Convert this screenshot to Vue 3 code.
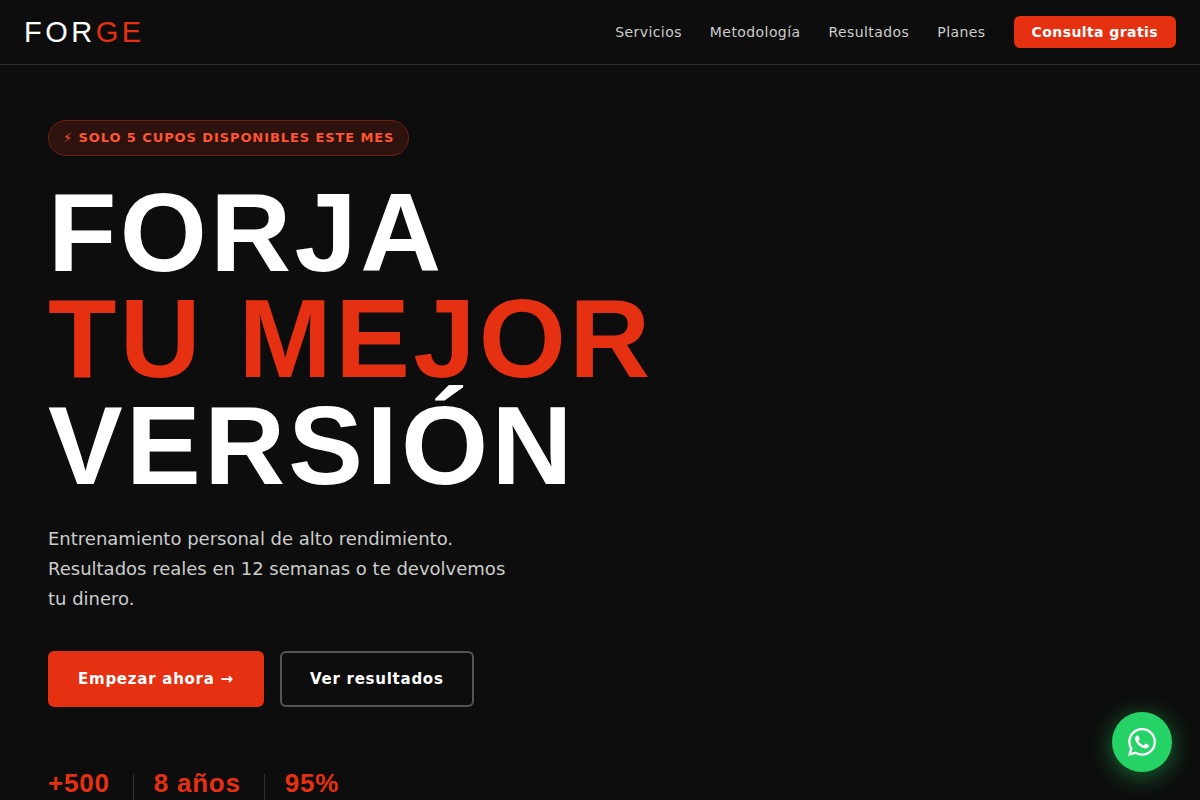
<script setup>
const links = ['Servicios', 'Metodología', 'Resultados', 'Planes']
const stats = ['+500', '8 años', '95%']
</script>

<template>
  <div class="page">
    <header class="nav">
      <a class="logo" href="#inicio">FOR<span>GE</span></a>
      <nav class="menu">
        <a v-for="link in links" :key="link" :href="'#' + link.toLowerCase()">{{ link }}</a>
        <a class="cta" href="#consulta">Consulta gratis</a>
      </nav>
    </header>
    <main class="hero">
      <div class="badge">⚡ Solo 5 cupos disponibles este mes</div>
      <h1>FORJA<br /><span>TU MEJOR</span><br />VERSIÓN</h1>
      <p class="lead">Entrenamiento personal de alto rendimiento. Resultados reales en 12 semanas o te devolvemos tu dinero.</p>
      <div class="actions">
        <a class="btn primary" href="#planes">Empezar ahora →</a>
        <a class="btn outline" href="#resultados">Ver resultados</a>
      </div>
      <div class="stats">
        <template v-for="(value, index) in stats" :key="value">
          <div v-if="index > 0" class="divider"></div>
          <div class="stat">{{ value }}</div>
        </template>
      </div>
    </main>
    <a class="whatsapp" href="#whatsapp" aria-label="WhatsApp">
      <svg viewBox="0 0 24 24" width="28" height="28" fill="#fff" aria-hidden="true">
        <path d="M17.472 14.382c-.297-.149-1.758-.867-2.03-.967-.273-.099-.471-.148-.67.15-.197.297-.767.966-.94 1.164-.173.199-.347.223-.644.075-.297-.15-1.255-.463-2.39-1.475-.883-.788-1.48-1.761-1.653-2.059-.173-.297-.018-.458.13-.606.134-.133.298-.347.446-.52.149-.174.198-.298.298-.497.099-.198.05-.371-.025-.52-.075-.149-.669-1.612-.916-2.207-.242-.579-.487-.5-.669-.51-.173-.008-.371-.01-.57-.01-.198 0-.52.074-.792.372-.272.297-1.04 1.016-1.04 2.479 0 1.462 1.065 2.875 1.213 3.074.149.198 2.096 3.2 5.077 4.487.709.306 1.262.489 1.694.625.712.227 1.36.195 1.871.118.571-.085 1.758-.719 2.006-1.413.248-.694.248-1.289.173-1.413-.074-.124-.272-.198-.57-.347m-5.421 7.403h-.004a9.87 9.87 0 01-5.031-1.378l-.361-.214-3.741.982.998-3.648-.235-.374a9.86 9.86 0 01-1.51-5.26c.001-5.45 4.436-9.884 9.888-9.884 2.64 0 5.122 1.03 6.988 2.898a9.825 9.825 0 012.893 6.994c-.003 5.45-4.437 9.884-9.885 9.884m8.413-18.297A11.815 11.815 0 0012.05 0C5.495 0 .16 5.335.157 11.892c0 2.096.547 4.142 1.588 5.945L.057 24l6.305-1.654a11.882 11.882 0 005.683 1.448h.005c6.554 0 11.89-5.335 11.893-11.893a11.821 11.821 0 00-3.48-8.413z" />
      </svg>
    </a>
  </div>
</template>

<style>
body {
  background: #0d0d0d;
}
</style>

<style scoped>
.page {
  min-height: 100vh;
  background: #0d0d0d;
  color: #fff;
  font-family: "DejaVu Sans", sans-serif;
}
a {
  color: inherit;
  text-decoration: none;
}
.nav {
  display: flex;
  align-items: center;
  justify-content: space-between;
  height: 64px;
  padding: 0 24px;
  border-bottom: 1px solid #2e2e2e;
}
.logo {
  font: 29px "Liberation Sans", sans-serif;
  letter-spacing: 0.12em;
}
.logo span,
h1 span {
  color: #e63012;
}
.menu {
  display: flex;
  align-items: center;
  gap: 28px;
  color: #ccc;
  font-size: 14px;
  letter-spacing: 0.03em;
}
.cta {
  padding: 8px 18px;
  border-radius: 6px;
  background: #e63012;
  color: #fff;
  font-weight: 700;
  line-height: 16px;
}
.hero {
  padding: 55px 48px 0;
}
.badge {
  width: fit-content;
  padding: 0 14px;
  border: 1px solid #70200f;
  border-radius: 18px;
  background: #2e120e;
  color: #ff5533;
  font-size: 13px;
  font-weight: 700;
  line-height: 34px;
  letter-spacing: 0.07em;
  text-transform: uppercase;
}
h1 {
  margin: 24px 0 25px;
  font: 700 112px/0.95 "Liberation Sans", sans-serif;
  letter-spacing: 0.03em;
}
.lead {
  max-width: 480px;
  margin: 0 0 37px;
  color: #ccc;
  font-size: 18px;
  line-height: 30px;
}
.actions {
  display: flex;
  gap: 16px;
}
.btn {
  box-sizing: border-box;
  padding: 0 28px;
  border: 2px solid #e63012;
  border-radius: 6px;
  font-size: 15px;
  font-weight: 700;
  line-height: 52px;
  letter-spacing: 0.05em;
}
.primary {
  background: #e63012;
}
.outline {
  border-color: #555;
}
.stats {
  display: flex;
  gap: 20px;
  margin-top: 63px;
}
.stat {
  padding-right: 3px;
  color: #e63012;
  font: 700 26px/26px "Liberation Sans", sans-serif;
  letter-spacing: 0.03em;
}
.divider {
  width: 1px;
  height: 36px;
  margin-top: 4px;
  background: #333;
}
.whatsapp {
  position: fixed;
  right: 28px;
  bottom: 28px;
  display: grid;
  place-items: center;
  width: 60px;
  height: 60px;
  border-radius: 50%;
  background: #25d366;
  box-shadow: 0 4px 24px rgba(37, 211, 102, 0.5);
}
</style>
